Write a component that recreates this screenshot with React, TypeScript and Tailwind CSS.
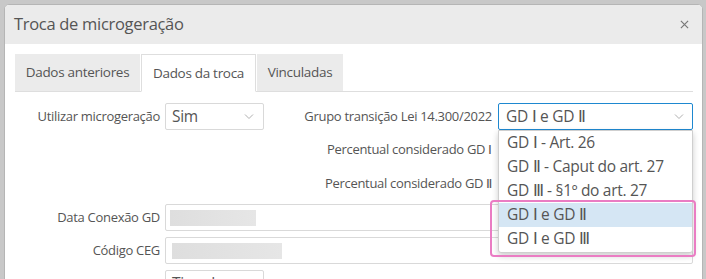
import React from "react";

const font = { fontFamily: '"Open Sans", "Noto Sans", sans-serif' };

function Chevron() {
  return (
    <svg width="10" height="7" viewBox="0 0 10 7" className="shrink-0">
      <path d="M1 1.5 L5 5.5 L9 1.5" fill="none" stroke="#b0b0b0" strokeWidth="1" />
    </svg>
  );
}

export default function App() {
  const items = [
    "GD Ⅰ - Art. 26",
    "GD Ⅱ - Caput do art. 27",
    "GD Ⅲ - §1º do art. 27",
    "GD Ⅰ e GD Ⅱ",
    "GD Ⅰ e GD Ⅲ",
  ];
  return (
    <div
      className="w-[706px] h-[279px] overflow-hidden bg-[#c8c8c8] pl-[4px] pt-[4px] pr-[3px]"
      style={font}
    >
      <div className="h-[290px] bg-white rounded-t-[5px] border border-[#b5b5b5] flex flex-col">
        <div className="h-[39px] bg-[#ebebeb] rounded-t-[4px] flex items-center justify-between pl-[9px] pr-[13px] shrink-0">
          <span className="text-[16.5px] tracking-[-0.3px] text-[#555] leading-none">Troca de microgeração</span>
          <svg width="9" height="9" viewBox="0 0 10 10">
            <path d="M1 1 L9 9 M9 1 L1 9" stroke="#777" strokeWidth="1.3" />
          </svg>
        </div>
        <div className="pl-[10px] pr-[9px] pt-[10px]">
          <div className="flex items-end border-b border-[#dedede] h-[38px]">
            <div className="w-[125px] h-[37px] bg-[#ebebeb] flex items-center justify-center text-[13.5px] tracking-[-0.3px] text-[#555] mr-[1px]">
              Dados anteriores
            </div>
            <div className="w-[115px] h-[38px] bg-white border border-[#dedede] border-b-white -mb-[1px] flex items-center justify-center text-[13.5px] tracking-[-0.3px] text-[#555]">
              Dados da troca
            </div>
            <div className="w-[86px] h-[37px] bg-[#ebebeb] flex items-center justify-center text-[13.5px] tracking-[-0.3px] text-[#555] ml-[1px]">
              Vinculadas
            </div>
          </div>

          <div className="mt-[11px] flex flex-col gap-[6px] text-[13px] tracking-[-0.3px] text-[#555]">
            {/* row 1 */}
            <div className="flex items-center h-[27px]">
              <div className="w-[145px] text-right mr-[5px] whitespace-nowrap">Utilizar microgeração</div>
              <div className="w-[99px] h-[27px] border border-[#d9d9d9] rounded-[2px] flex items-center justify-between pl-[6px] pr-[9px]">
                <span className="text-[15.5px]">Sim</span>
                <Chevron />
              </div>
              <div className="flex-1 text-right pr-[6px] whitespace-nowrap">Grupo transição Lei 14.300/2022</div>
              <div className="relative w-[195px] h-[27px]">
                <div className="h-[27px] border border-[#1e88d0] rounded-[2px] flex items-center justify-between pl-[7px] pr-[8px]">
                  <span className="text-[15.5px]">GD Ⅰ e GD Ⅱ</span>
                  <Chevron />
                </div>
                <div className="absolute left-0 top-[27px] w-[195px] z-10 bg-white border border-[#cfcfcf] rounded-b-[3px] shadow-[0_3px_6px_rgba(0,0,0,0.2)] pb-[1px]">
                  {items.map((t, i) => (
                    <div
                      key={t}
                      className={
                        i === 3
                          ? "h-[24px] flex items-center pl-[8px] text-[15.5px] bg-[#d5e6f4] text-[#555]"
                          : "h-[24px] flex items-center pl-[8px] text-[15.5px] text-[#555]"
                      }
                    >
                      {t}
                    </div>
                  ))}
                </div>
                <div className="absolute left-[-8px] top-[97px] w-[206px] h-[57px] border-2 border-[#ea7cc3] rounded-[4px] z-20 pointer-events-none" />
              </div>
            </div>
            {/* row 2 */}
            <div className="flex items-center h-[28px]">
              <div className="w-[249px]" />
              <div className="flex-1 text-right pr-[6px] whitespace-nowrap">Percentual considerado GD Ⅰ</div>
              <div className="w-[195px] h-[27px] border border-[#d9d9d9] rounded-[2px]" />
            </div>
            {/* row 3 */}
            <div className="flex items-center h-[28px]">
              <div className="w-[249px]" />
              <div className="flex-1 text-right pr-[6px] whitespace-nowrap">Percentual considerado GD Ⅱ</div>
              <div className="w-[195px] h-[27px] border border-[#d9d9d9] rounded-[2px]" />
            </div>
            {/* row 4 */}
            <div className="flex items-center h-[27px]">
              <div className="w-[145px] text-right mr-[5px] whitespace-nowrap">Data Conexão GD</div>
              <div className="flex-1 h-[27px] border border-[#d9d9d9] rounded-[2px] flex items-center pl-[4px]">
                <div className="w-[86px] h-[16px] bg-gradient-to-r from-[#dedede] to-[#e6e6e6]" />
              </div>
            </div>
            {/* row 5 */}
            <div className="flex items-center h-[27px]">
              <div className="w-[145px] text-right mr-[5px] whitespace-nowrap">Código CEG</div>
              <div className="flex-1 h-[27px] border border-[#d9d9d9] rounded-[2px] flex items-center pl-[6px]">
                <div className="w-[110px] h-[16px] bg-gradient-to-r from-[#dedede] to-[#e6e6e6]" />
              </div>
            </div>
            {/* row 6 */}
            <div className="flex items-start h-[27px]">
              <div className="w-[145px] mr-[5px]" />
              <div className="w-[99px] h-[27px] border border-[#d9d9d9] rounded-[2px] flex items-center pl-[6px]">
                <span className="text-[15.5px]">Tipo de</span>
              </div>
            </div>
          </div>
        </div>
      </div>
    </div>
  );
}
